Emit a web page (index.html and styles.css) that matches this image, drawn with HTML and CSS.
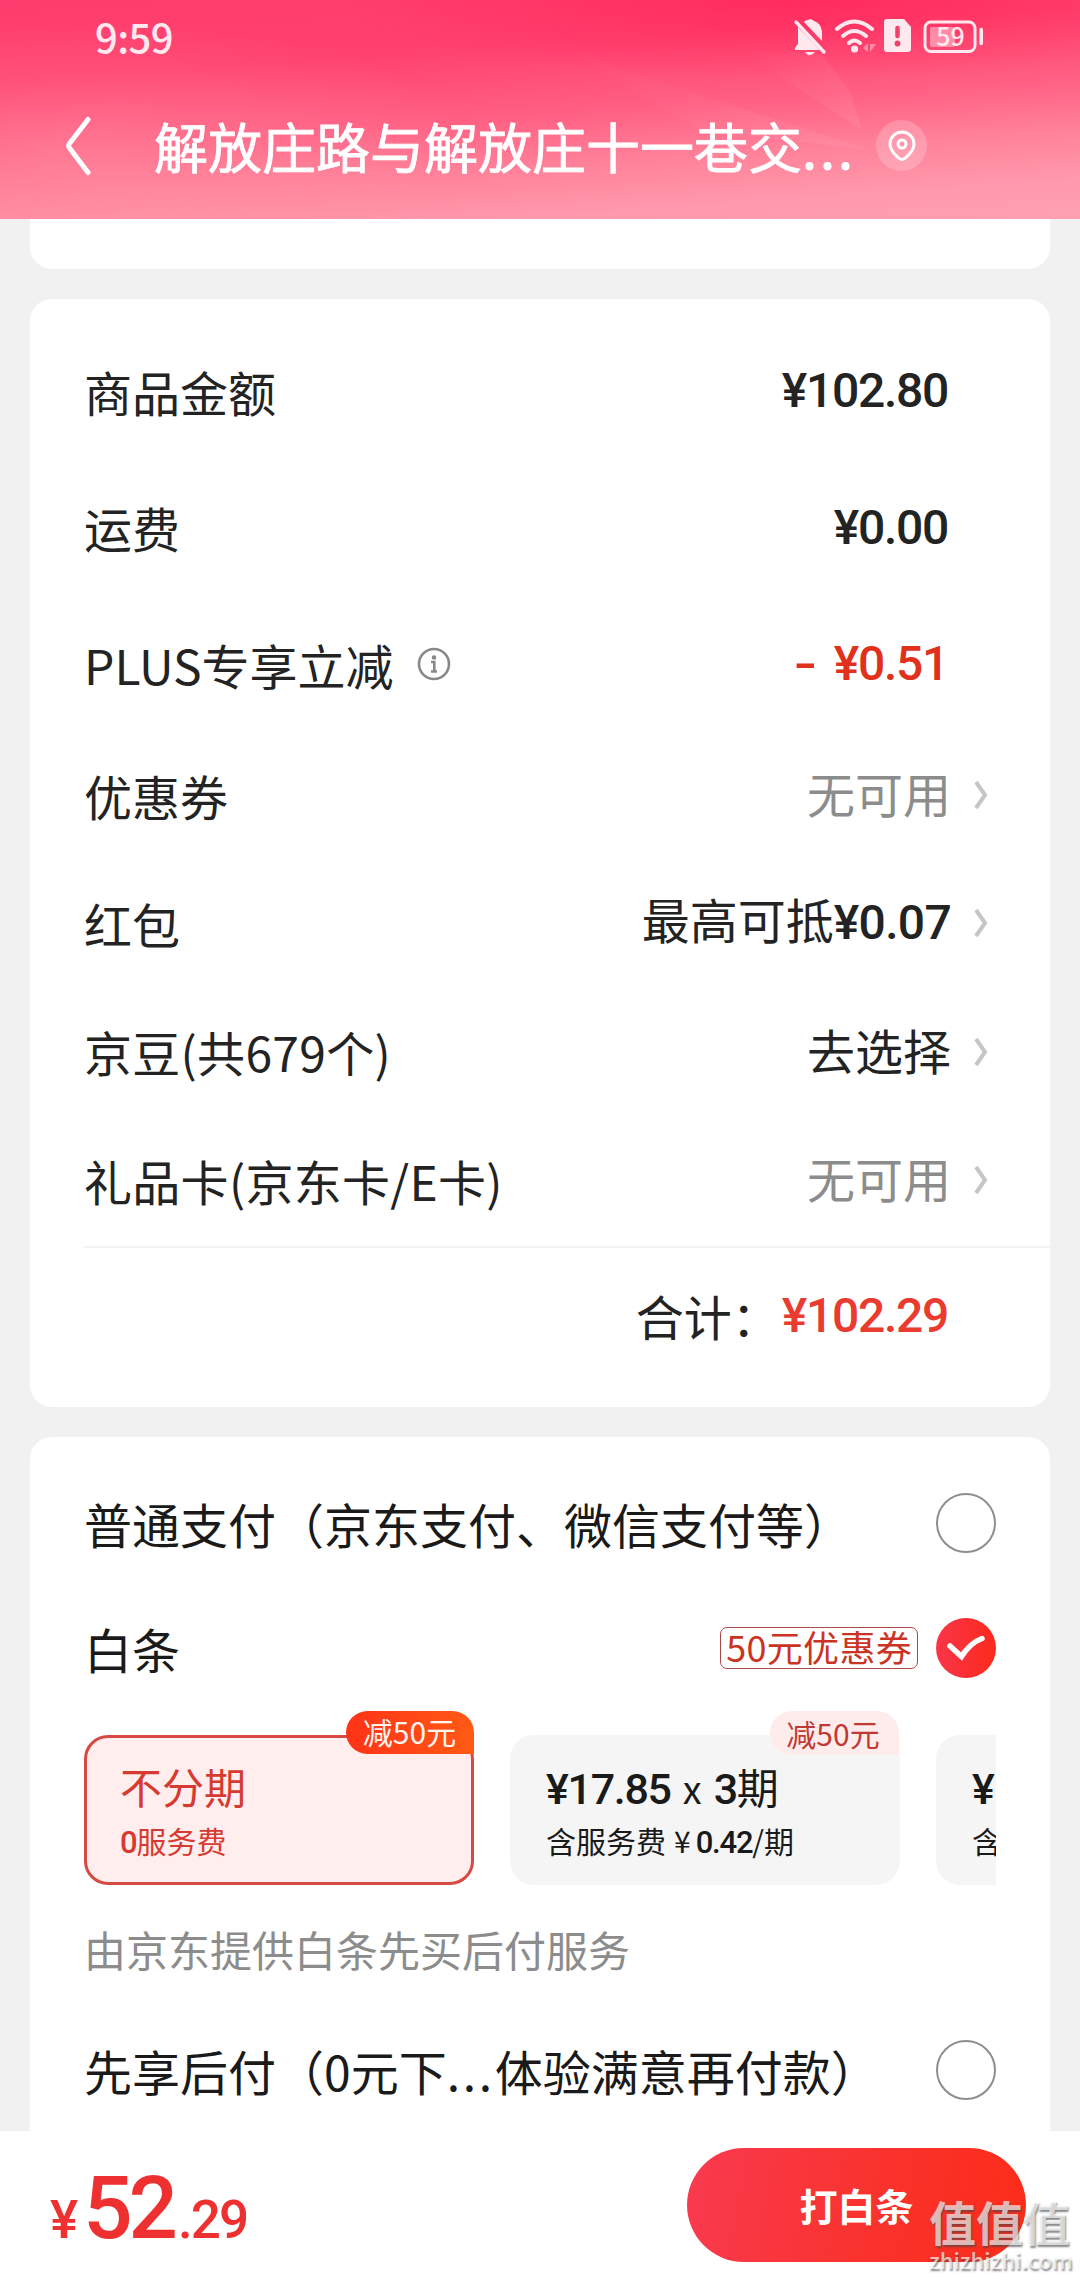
FILE: index.html
```html
<!DOCTYPE html>
<html lang="zh-CN">
<head>
<meta charset="utf-8">
<title>确认订单</title>
<link rel="stylesheet" href="styles.css">
</head>
<body>
<div class="screen">
  <header class="header">
    <svg class="rays" viewBox="0 0 1080 219" preserveAspectRatio="none" aria-hidden="true">
      <defs>
        <linearGradient id="ray" x1="0" y1="0" x2="1" y2="0"><stop offset="0" stop-color="#fff" stop-opacity="0"/><stop offset="1" stop-color="#fff" stop-opacity=".07"/></linearGradient>
      </defs>
      <path d="M740 50 L822 54 L850 92 L862 130 Z" fill="url(#ray)"/>
      <path d="M560 48 L700 95 L870 150 L700 130 Z" fill="url(#ray)"/>
    </svg>
    <div class="status">
      <span class="clock">9:59</span>
      <svg class="status-icons" width="192" height="38" viewBox="793 18 192 38" fill="#ffe9ef">
        <path d="M798 27 L820 50 H795 Q794 48 798 44 Z M804 22 Q805 20 808 20 Q811 18 814 21 Q821 23 822 32 V41 Z M805 52 H815 Q812 56 808 55 Z"/>
        <path d="M796 22 L824 52" stroke="#ffe9ef" stroke-width="3.4" stroke-linecap="round"/>
        <g fill="none" stroke="#ffe9ef" stroke-width="4" stroke-linecap="round">
          <path d="M837 29 Q854 14 872 29"/>
          <path d="M843 36 Q854 26 866 36"/>
          <path d="M849 43 Q854 38 860 43"/>
        </g>
        <circle cx="854.500" cy="49" r="3.600"/>
        <path d="M863 48 L868 43 V52 Z M870 44 H876 L870 52 Z" opacity=".45"/>
        <path d="M887 19 H904 L911 27 V49 Q911 52 908 52 H887 Q884 52 884 49 V22 Q884 19 887 19 Z"/>
        <path d="M897.500 28 V36" stroke="#f0406b" stroke-width="4.500" stroke-linecap="round"/>
        <circle cx="897.500" cy="43.500" r="2.900" fill="#f0406b"/>
        <rect x="925" y="22" width="50" height="29.500" rx="6" fill="none" stroke="#ffe9ef" stroke-width="3"/>
        <rect x="930" y="27" width="25" height="20" rx="2" opacity=".45"/>
        <path d="M981.200 29.500 V43.500" stroke="#ffe9ef" stroke-width="3.600" stroke-linecap="round"/>
        <text class="battery-text" x="950.500" y="46" text-anchor="middle">59</text>
      </svg>
    </div>
    <div class="nav">
      <svg class="back" width="28" height="60" viewBox="0 0 28 60" fill="none" stroke="#fff" stroke-width="5" stroke-linecap="round" stroke-linejoin="round"><path d="M24 3.500 L5.500 27.500 Q4 29.500 5.500 32 L24 56.500"/></svg>
      <h1 class="title">解放庄路与解放庄十一巷交<span class="dots">...</span></h1>
      <span class="pin"><svg width="28" height="32" viewBox="0 0 28 32" fill="none" stroke="#fff" stroke-width="3"><path d="M14 29.500 Q11.800 29.500 8 25.500 Q2 19.500 2 14 A12 12 0 0 1 26 14 Q26 19.500 20 25.500 Q16.200 29.500 14 29.500 Z"/><circle cx="14" cy="14" r="4"/></svg></span>
    </div>
  </header>

  <main class="content">
    <section class="card card-previous"></section>

    <section class="card summary">
      <div class="row"><span>商品金额</span><span class="value price">¥102.80</span></div>
      <div class="row"><span>运费</span><span class="value price">¥0.00</span></div>
      <div class="row"><span>PLUS专享立减</span>
        <svg class="info" width="34" height="34" viewBox="0 0 34 34" fill="none" stroke="#888" stroke-width="2.600"><circle cx="17" cy="17" r="15"/><path d="M14 15 H17.300 V24 M14 24.500 H20"/><circle cx="17" cy="10.500" r="1" fill="#888"/></svg>
        <span class="value price red"><span class="minus">-</span>¥0.51</span></div>
      <div class="row link"><span>优惠券</span><span class="value muted">无可用</span><svg class="chevron" viewBox="0 0 14 32"><path d="M2 3 L11 16 L2 29"/></svg></div>
      <div class="row link"><span>红包</span><span class="value">最高可抵<span class="price wide">¥0.07</span></span><svg class="chevron" viewBox="0 0 14 32"><path d="M2 3 L11 16 L2 29"/></svg></div>
      <div class="row link"><span class="loose">京豆(共679个)</span><span class="value">去选择</span><svg class="chevron" viewBox="0 0 14 32"><path d="M2 3 L11 16 L2 29"/></svg></div>
      <div class="row link"><span class="loose">礼品卡(京东卡/E卡)</span><span class="value muted">无可用</span><svg class="chevron" viewBox="0 0 14 32"><path d="M2 3 L11 16 L2 29"/></svg></div>
      <div class="total"><span class="total-label">合计：</span><span class="price total-price">¥102.29</span></div>
    </section>

    <section class="card payment">
      <div class="pay-row"><span class="pay-name">普通支付（京东支付、微信支付等）</span><span class="radio"></span></div>
      <div class="pay-row"><span class="pay-name">白条</span><span class="coupon">50元优惠券</span>
        <svg class="checked" width="60" height="60" viewBox="0 0 60 60"><defs><linearGradient id="check-fill" x1="0" y1="0" x2="1" y2="0"><stop offset="0" stop-color="#fa3549"/><stop offset="1" stop-color="#fb2a1c"/></linearGradient></defs><circle cx="30" cy="30" r="30" fill="url(#check-fill)"/><path d="M14 28 L25.500 38.500 Q34 25 46 20.500" fill="none" stroke="#fff" stroke-width="5.500" stroke-linecap="round" stroke-linejoin="miter"/></svg>
      </div>
      <div class="plans">
        <div class="plan selected"><span class="badge">减50元</span><div class="plan-title">不分期</div><div class="plan-fee"><b>0</b>服务费</div></div>
        <div class="plan"><span class="badge">减50元</span><div class="plan-title"><b>¥17.85</b><span class="times">x</span><b>3</b>期</div><div class="plan-fee">含服务费<span class="yen">¥</span><b>0.42</b>/期</div></div>
        <div class="plan"><div class="plan-title"><b>¥</b></div><div class="plan-fee">含</div></div>
      </div>
      <p class="note">由京东提供白条先买后付服务</p>
      <div class="pay-row"><span class="pay-name">先享后付（0元下<span class="ellipsis">...</span>体验满意再付款）</span><span class="radio"></span></div>
    </section>
  </main>

  <footer class="footer">
    <div class="amount"><span class="currency">¥</span><span class="whole">52</span><span class="cents">.29</span></div>
    <button class="submit">打白条</button>
  </footer>
  <div class="watermark"><div class="mark">值值值</div><div class="site">zhizhizhi.com</div></div>
</div>
</body>
</html>
```

FILE: styles.css
```css
* { box-sizing: border-box; }
body { margin: 0; font-family: "Noto Sans CJK SC", sans-serif; color: #232323; }
.screen { position: relative; display: flex; flex-direction: column; width: 1080px; height: 2280px; overflow: hidden; background: #f1f1f1; }

.header {
  position: relative; flex: none; height: 219px; color: #fff;
  background:
    radial-gradient(ellipse 460px 80px at 800px 0, rgba(255, 20, 72, .45), transparent),
    radial-gradient(ellipse 420px 130px at 60px 150px, rgba(255, 175, 185, .3), transparent),
    linear-gradient(176deg, #ff3c6d 0, #ff4270 28%, #ff6083 52%, #ff829a 70%, #ff98ab 86%, #ffa0b1 100%);
}
.rays { position: absolute; inset: 0; width: 100%; height: 100%; }
.status { position: relative; display: flex; justify-content: space-between; align-items: center; height: 76px; padding: 0 95px; }
.clock { padding-bottom: 5px; font: 500 40px/1 "Noto Sans CJK SC", sans-serif; letter-spacing: -.6px; color: #ffe9ef; }
.status-icons { margin-top: -2px; }
.battery-text { font: 500 25px "Noto Sans CJK SC", sans-serif; }
.nav { position: relative; display: flex; align-items: center; height: 139px; padding-left: 64px; }
.back { flex: none; }
.title { margin: 0 0 0 62px; font-size: 54px; line-height: 78px; font-weight: 400; -webkit-text-stroke: .8px #fff; white-space: nowrap; }
.dots { letter-spacing: 3px; }
.pin { display: flex; align-items: center; justify-content: center; width: 51px; height: 51px; margin-left: 20px; border-radius: 50%; background: rgba(255, 255, 255, .2); }

.content { flex: 1; min-height: 0; overflow: hidden; display: flex; flex-direction: column; gap: 30px; padding: 0 30px; }
.card { flex: none; background: #fff; border-radius: 22px; }
.card-previous { height: 50px; border-radius: 0 0 22px 22px; }
.summary { height: 1108px; padding: 24px 0 0 54px; }
.row { display: flex; align-items: center; height: 136.5px; padding-right: 102px; font-size: 48px; line-height: 70px; white-space: nowrap; }
.row > span:first-child { padding-bottom: 1px; }
.row.link { height: 128.3px; padding: 0 61px 3px 0; }
.value { margin-left: auto; }
.link .value { margin-right: -2px; padding-bottom: 6px; }
.price { font-family: Roboto, sans-serif; font-weight: 500; letter-spacing: -1.3px; }
.wide { letter-spacing: -.7px; }
.loose { letter-spacing: .3px; }
.info { margin-left: 23px; }
.red { color: #e1301b; }
.minus { display: inline-block; margin-right: 22px; transform: scaleX(1.4); }
.muted { color: #8c8c8c; }
.chevron { width: 14px; height: 32px; margin-left: 25px; margin-right: 1px; fill: none; stroke: #c6c6c6; stroke-width: 4; }
.total { display: flex; align-items: center; justify-content: flex-end; height: 139px; padding-right: 102px; border-top: 2px solid #f3f3f3; font-size: 48px; line-height: 70px; }
.total-label { padding: 0 2px 3px 0; }
.total-price { color: #e93b30; }

.payment { height: 760px; padding: 23px 54px 0; color: #1a1a1a; }
.pay-row { display: flex; align-items: center; justify-content: space-between; height: 125px; font-size: 48px; line-height: 70px; white-space: nowrap; }
.radio { width: 60px; height: 60px; border: 2px solid #8e8e8e; border-radius: 50%; }
.coupon { height: 42px; margin-left: auto; margin-right: 18px; padding: 0 5px; border: 1.5px solid #a84a46; border-radius: 7px; font-size: 36px; line-height: 36px; letter-spacing: .3px; color: #cb3322; }
.plans { display: flex; gap: 36px; height: 175px; padding-top: 25px; overflow: hidden; }
.plan { position: relative; flex: none; width: 390px; height: 150px; padding: 20px 36px 0; border-radius: 24px; background: #f5f5f5; white-space: nowrap; }
.selected { padding: 17px 33px 0; border: 3px solid #d74a43; background: #ffeeed; color: #d63a30; }
.plan-title { height: 61px; font-size: 42px; line-height: 61px; }
.plan-title b { font: 500 43px/1 Roboto, sans-serif; letter-spacing: -1.3px; }
.times { margin: 0 12px; font-size: 38px; }
.plan-fee { font-size: 30px; line-height: 48px; }
.plan-fee b { font: 500 31px/1 Roboto, sans-serif; letter-spacing: -1.2px; }
.yen { margin: 0 5px 0 8px; }
.badge { position: absolute; top: -24px; right: 1px; width: 129px; height: 44px; padding-right: 3px; border-radius: 22px 22px 0 22px; background: #feecec; color: #bf3a34; font-size: 30px; line-height: 44px; text-align: center; }
.selected .badge { top: -27px; right: -3px; width: 128px; height: 43px; padding-right: 1px; line-height: 41px; background: linear-gradient(90deg, #ff3318, #ff5a14); color: #fff4ef; }
.note { margin: 0; padding-top: 33px; font-size: 42px; line-height: 61px; color: #8c8c8c; }
.payment .note + .pay-row { margin-top: 28px; }
.ellipsis { letter-spacing: 2.7px; }

.footer { position: relative; flex: none; display: flex; justify-content: space-between; height: 149px; padding: 17px 54px 0 50px; background: #fff; }
.amount { display: flex; align-items: baseline; height: 113px; padding-top: 4px; font-family: Roboto, sans-serif; font-weight: 500; color: #ee3030; }
.currency, .cents { font-size: 53px; }
.whole { margin-left: 5px; font-size: 87px; line-height: 113px; letter-spacing: -4px; }
.cents { margin-left: 4px; letter-spacing: -2px; }
.submit { width: 339px; height: 114px; padding: 0; border: 0; border-radius: 57px; background: linear-gradient(100deg, #f93a50, #f93330 50%, #fc2c18); color: #fff; font: 700 38px/56px "Noto Sans CJK SC", sans-serif; }
.watermark { position: absolute; left: 929px; top: 2197px; width: 146px; color: rgba(255, 255, 255, .68); text-shadow: 1px 2px 2px rgba(70, 70, 70, .65); white-space: nowrap; }
.mark { font-size: 47px; line-height: 48px; font-weight: 700; }
.site { font-size: 22px; line-height: 29px; font-weight: 500; }
```
